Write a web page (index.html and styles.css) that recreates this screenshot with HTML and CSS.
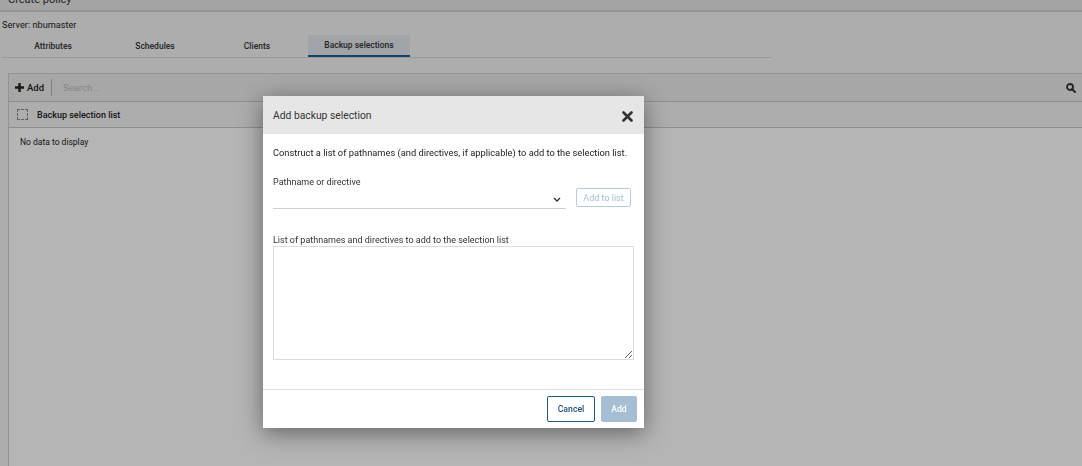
FILE: index.html
```html
<!DOCTYPE html>
<html>
<head>
<meta charset="utf-8">
<link rel="stylesheet" href="styles.css">
</head>
<body>
<div class="app">
  <div class="topbar"><span class="crumb">Create policy</span></div>
  <div class="header">
    <div class="server">Server: nbumaster</div>
    <div class="tabs">
      <div class="tab">Attributes</div>
      <div class="tab">Schedules</div>
      <div class="tab">Clients</div>
      <div class="tab active">Backup selections</div>
    </div>
  </div>
  <div class="main">
    <div class="panel">
      <div class="toolbar">
        <button class="addbtn"><svg width="9" height="9" viewBox="0 0 9 9"><path d="M3.3 0h2.4v3.3H9v2.4H5.7V9H3.3V5.7H0V3.3h3.3z" fill="#222"/></svg>Add</button>
        <span class="sep"></span>
        <span class="search">Search...</span>
        <svg class="searchicon" width="10" height="10" viewBox="0 0 10 10"><circle cx="4" cy="4" r="3" fill="none" stroke="#333" stroke-width="1.8"/><path d="M6.2 6.2 9 9" stroke="#333" stroke-width="2" stroke-linecap="round"/></svg>
      </div>
      <div class="listhead">
        <span class="checkbox"></span>
        <span class="colname">Backup selection list</span>
      </div>
      <div class="empty">No data to display</div>
    </div>
  </div>
</div>
<div class="overlay"></div>
<div class="modal">
  <div class="mhead">
    <span class="mtitle">Add backup selection</span>
    <svg class="close" width="11" height="11" viewBox="0 0 11 11"><path d="M1.5 1.5 9.5 9.5M9.5 1.5 1.5 9.5" stroke="#333" stroke-width="2.6" stroke-linecap="round"/></svg>
  </div>
  <div class="mbody">
    <p class="intro">Construct a list of pathnames (and directives, if applicable) to add to the selection list.</p>
    <div class="label">Pathname or directive</div>
    <div class="row">
      <div class="select">
        <svg class="chev" width="8" height="5" viewBox="0 0 8 5"><path d="M1 1l3 3 3-3" fill="none" stroke="#333" stroke-width="1.4"/></svg>
      </div>
      <button class="addlist">Add to list</button>
    </div>
    <div class="label label2">List of pathnames and directives to add to the selection list</div>
    <textarea class="ta"></textarea>
  </div>
  <div class="mfoot">
    <button class="cancel">Cancel</button>
    <button class="add">Add</button>
  </div>
</div>
</body>
</html>
```
FILE: styles.css
```css
* { box-sizing: border-box; }
html, body { margin: 0; padding: 0; height: 100%; }
body {
  font-family: Roboto, "Liberation Sans", sans-serif;
  color: #222;
  overflow: hidden;
  background: #f4f4f4;
}
.app { height: 466px; display: flex; flex-direction: column; }
.topbar {
  height: 12px;
  background: #e7e7e7;
  border-bottom: 2px solid #cfcfcf;
  overflow: hidden;
}
.crumb { display: block; font-size: 11px; line-height: 11px; margin-top: -6px; padding-left: 8px; color: #333; }
.header { background: #f4f4f4; height: 61px; padding-top: 6px; }
.server { font-size: 9.2px; padding-left: 2px; line-height: 13px; color: #222; }
.tabs {
  display: flex;
  width: 770px;
  margin-left: 2px;
  margin-top: 4px;
  border-bottom: 1px solid #dadada;
}
.tab {
  width: 102px;
  height: 22px;
  font-size: 8.5px;
  font-weight: 500;
  line-height: 23px;
  text-align: center;
  color: #333;
}
.tab.active { background: #e3e8ee; border-bottom: 2px solid #1b5e92; line-height: 21px; }
.main { flex: 1; display: flex; padding-left: 8px; }
.panel {
  flex: 1;
  background: #fff;
  border-left: 1px solid #d0d0d0;
  border-top: 1px solid #d0d0d0;
  display: flex;
  flex-direction: column;
}
.toolbar {
  height: 28px;
  background: #ececec;
  border-bottom: 1px solid #c8c8c8;
  display: flex;
  align-items: center;
  padding-left: 6px;
  padding-right: 6px;
}
.addbtn {
  border: 0; background: none; padding: 0;
  font-family: inherit; font-size: 9.5px; font-weight: 500; color: #222;
  display: flex; align-items: center; gap: 3px;
}
.sep { width: 1px; height: 17px; background: #bbb; margin: 0 11px 0 7px; }
.search { font-size: 9.5px; color: #bdbdbd; flex: 1; }
.listhead {
  height: 26px;
  background: #f4f4f4;
  border-bottom: 1px solid #c8c8c8;
  display: flex;
  align-items: center;
  padding-left: 8px;
}
.checkbox { width: 11px; height: 11px; border: 1px dashed #888; margin-right: 9px; }
.colname { font-size: 9px; font-weight: 500; color: #222; }
.empty { font-size: 8.5px; padding: 9px 0 0 11px; color: #222; }
.overlay { position: fixed; inset: 0; background: rgba(0,0,0,0.29); }
.modal {
  position: absolute;
  left: 263px;
  top: 96px;
  width: 381px;
  height: 332px;
  background: #fff;
  box-shadow: 0 5px 22px rgba(0,0,0,0.45);
  display: flex;
  flex-direction: column;
}
.mhead {
  height: 38px;
  background: #e6e6e6;
  display: flex;
  align-items: center;
  justify-content: space-between;
  padding: 0 10px 0 10px;
}
.mtitle { font-size: 10.3px; color: #333; }
.close { margin-right: 1px; margin-top: 2px; }
.mbody { flex: 1; padding: 13px 10px 0 10px; border-bottom: 1px solid #ddd; }
.intro { margin: 0; font-size: 9.3px; line-height: 12px; color: #222; }
.label { font-size: 9px; color: #333; margin-top: 17px; line-height: 12px; }
.row { display: flex; align-items: flex-end; margin-top: 0; }
.select {
  width: 293px; height: 17px;
  border-bottom: 1px solid #cfcfcf;
  display: flex; align-items: flex-start; justify-content: flex-end;
  padding-right: 5px;
}
.chev { margin-top: 5px; }
.addlist {
  margin-left: 10px; margin-bottom: 2px;
  width: 55px; height: 19px;
  border: 1px solid #b8cde0; border-radius: 2px;
  background: #fff; color: #a6bdd3;
  font-family: inherit; font-size: 9px; padding: 0;
}
.label2 { margin-top: 25px; }
.ta {
  display: block;
  width: 361px; height: 114px;
  border: 1px solid #dcdcdc;
  margin-top: 0;
  resize: vertical;
}
.mfoot {
  height: 38px;
  display: flex;
  justify-content: flex-end;
  align-items: center;
  gap: 6px;
  padding: 0 7px 0 0;
}
.cancel, .add {
  height: 26px;
  border-radius: 2px;
  font-family: inherit;
  font-size: 8.7px;
  font-weight: 500;
  padding: 0;
}
.cancel { width: 48px; background: #fff; border: 1px solid #1f5684; color: #1a4f7c; }
.add { width: 36px; background: #a6bdd2; border: 1px solid #a6bdd2; color: #fff; }
```
